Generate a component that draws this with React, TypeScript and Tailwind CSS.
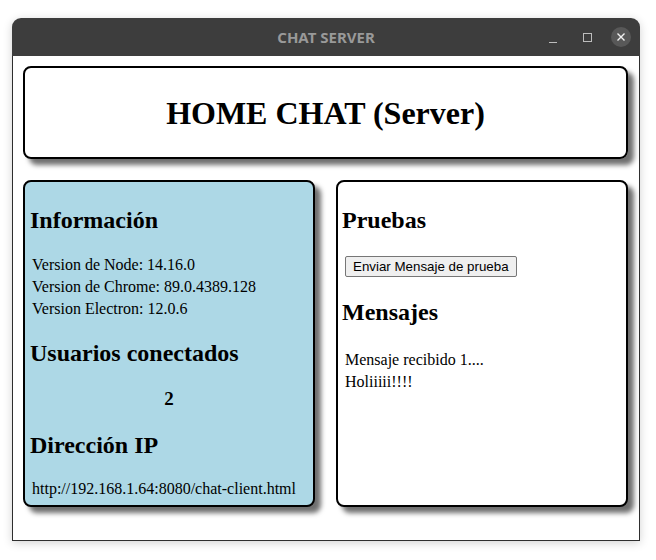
import React from 'react';

const serif = { fontFamily: '"Liberation Serif", "Times New Roman", serif' };

const Panel: React.FC<{ className?: string; children: React.ReactNode }> = ({ className = '', children }) => (
  <div className={`h-[327px] w-[292px] rounded-[8px] border-2 border-black px-1 shadow-[6px_6px_5px_#6f6f6f] ${className}`}>
    {children}
  </div>
);

const Heading: React.FC<{ children: React.ReactNode; className?: string }> = ({ children, className = '' }) => (
  <h2 className={`text-[24px] font-bold leading-[28px] text-black ${className}`}>{children}</h2>
);

export default function App() {
  return (
    <div className="h-[560px] w-[656px] bg-white pl-[12px] pt-[18px]" style={serif}>
      <div className="w-[628px] rounded-t-[9px] shadow-[0_2px_10px_rgba(0,0,0,0.18)]">
        {/* title bar */}
        <div className="relative flex h-[38px] items-center justify-center rounded-t-[9px] bg-[#3d3d3d]">
          <span
            className="text-[15px] font-bold text-[#999999]"
            style={{ fontFamily: '"Noto Sans", "Open Sans", sans-serif' }}
          >
            CHAT SERVER
          </span>
          <div className="absolute right-[9px] top-[9px] flex items-center">
            <div className="mr-[14px] flex h-[20px] w-[20px] items-end justify-center pb-[4px]">
              <div className="h-px w-[8px] bg-[#bdbdbd]" />
            </div>
            <div className="mr-[14px] flex h-[20px] w-[20px] items-center justify-center">
              <div className="h-[9px] w-[9px] border border-[#bdbdbd]" />
            </div>
            <div className="flex h-[20px] w-[20px] items-center justify-center rounded-full bg-[#585858]">
              <svg width="10" height="10" viewBox="0 0 10 10">
                <path d="M1.5 1.5 L8.5 8.5 M8.5 1.5 L1.5 8.5" stroke="#f2f2f2" strokeWidth="1.4" />
              </svg>
            </div>
          </div>
        </div>
        {/* content */}
        <div className="h-[485px] border-x border-b border-[#2e2e2e] bg-white pl-[10px] pt-[10px]">
          <div className="flex h-[93px] w-[605px] items-center justify-center rounded-[8px] border-2 border-black shadow-[6px_6px_5px_#6f6f6f]">
            <h1 className="text-[32px] font-bold leading-[36px] text-black">HOME CHAT (Server)</h1>
          </div>
          <div className="mt-[21px] flex gap-[21px]">
            <Panel className="bg-[#add8e6]">
              <Heading className="mt-[24px] pl-[1px]">Información</Heading>
              <div className="mt-[20px] pl-[3px] text-[16px] leading-[22px] text-black">
                <div>Version de Node: 14.16.0</div>
                <div>Version de Chrome: 89.0.4389.128</div>
                <div>Version Electron: 12.0.6</div>
              </div>
              <Heading className="mt-[19px] pl-[1px]">Usuarios conectados</Heading>
              <div className="mt-[21px] text-center text-[19px] font-bold leading-[22px]">2</div>
              <Heading className="mt-[21px] pl-[1px]">Dirección IP</Heading>
              <div className="mt-[19px] pl-[3px] text-[16px] leading-[22px]">http://192.168.1.64:8080/chat-client.html</div>
            </Panel>
            <Panel className="bg-white">
              <Heading className="mt-[24px]">Pruebas</Heading>
              <button
                className="ml-[3px] mt-[22px] h-[21px] rounded-[2px] border border-[#767676] bg-[#efefef] px-[7px] text-[13.33px] leading-[17px] text-black"
                style={{ fontFamily: '"Liberation Sans", Arial, sans-serif' }}
              >
                Enviar Mensaje de prueba
              </button>
              <Heading className="mt-[20px]">Mensajes</Heading>
              <div className="mt-[23px] pl-[3px] text-[16px] leading-[22px]">
                <div>Mensaje recibido 1....</div>
                <div>Holiiiii!!!!</div>
              </div>
            </Panel>
          </div>
        </div>
      </div>
    </div>
  );
}
